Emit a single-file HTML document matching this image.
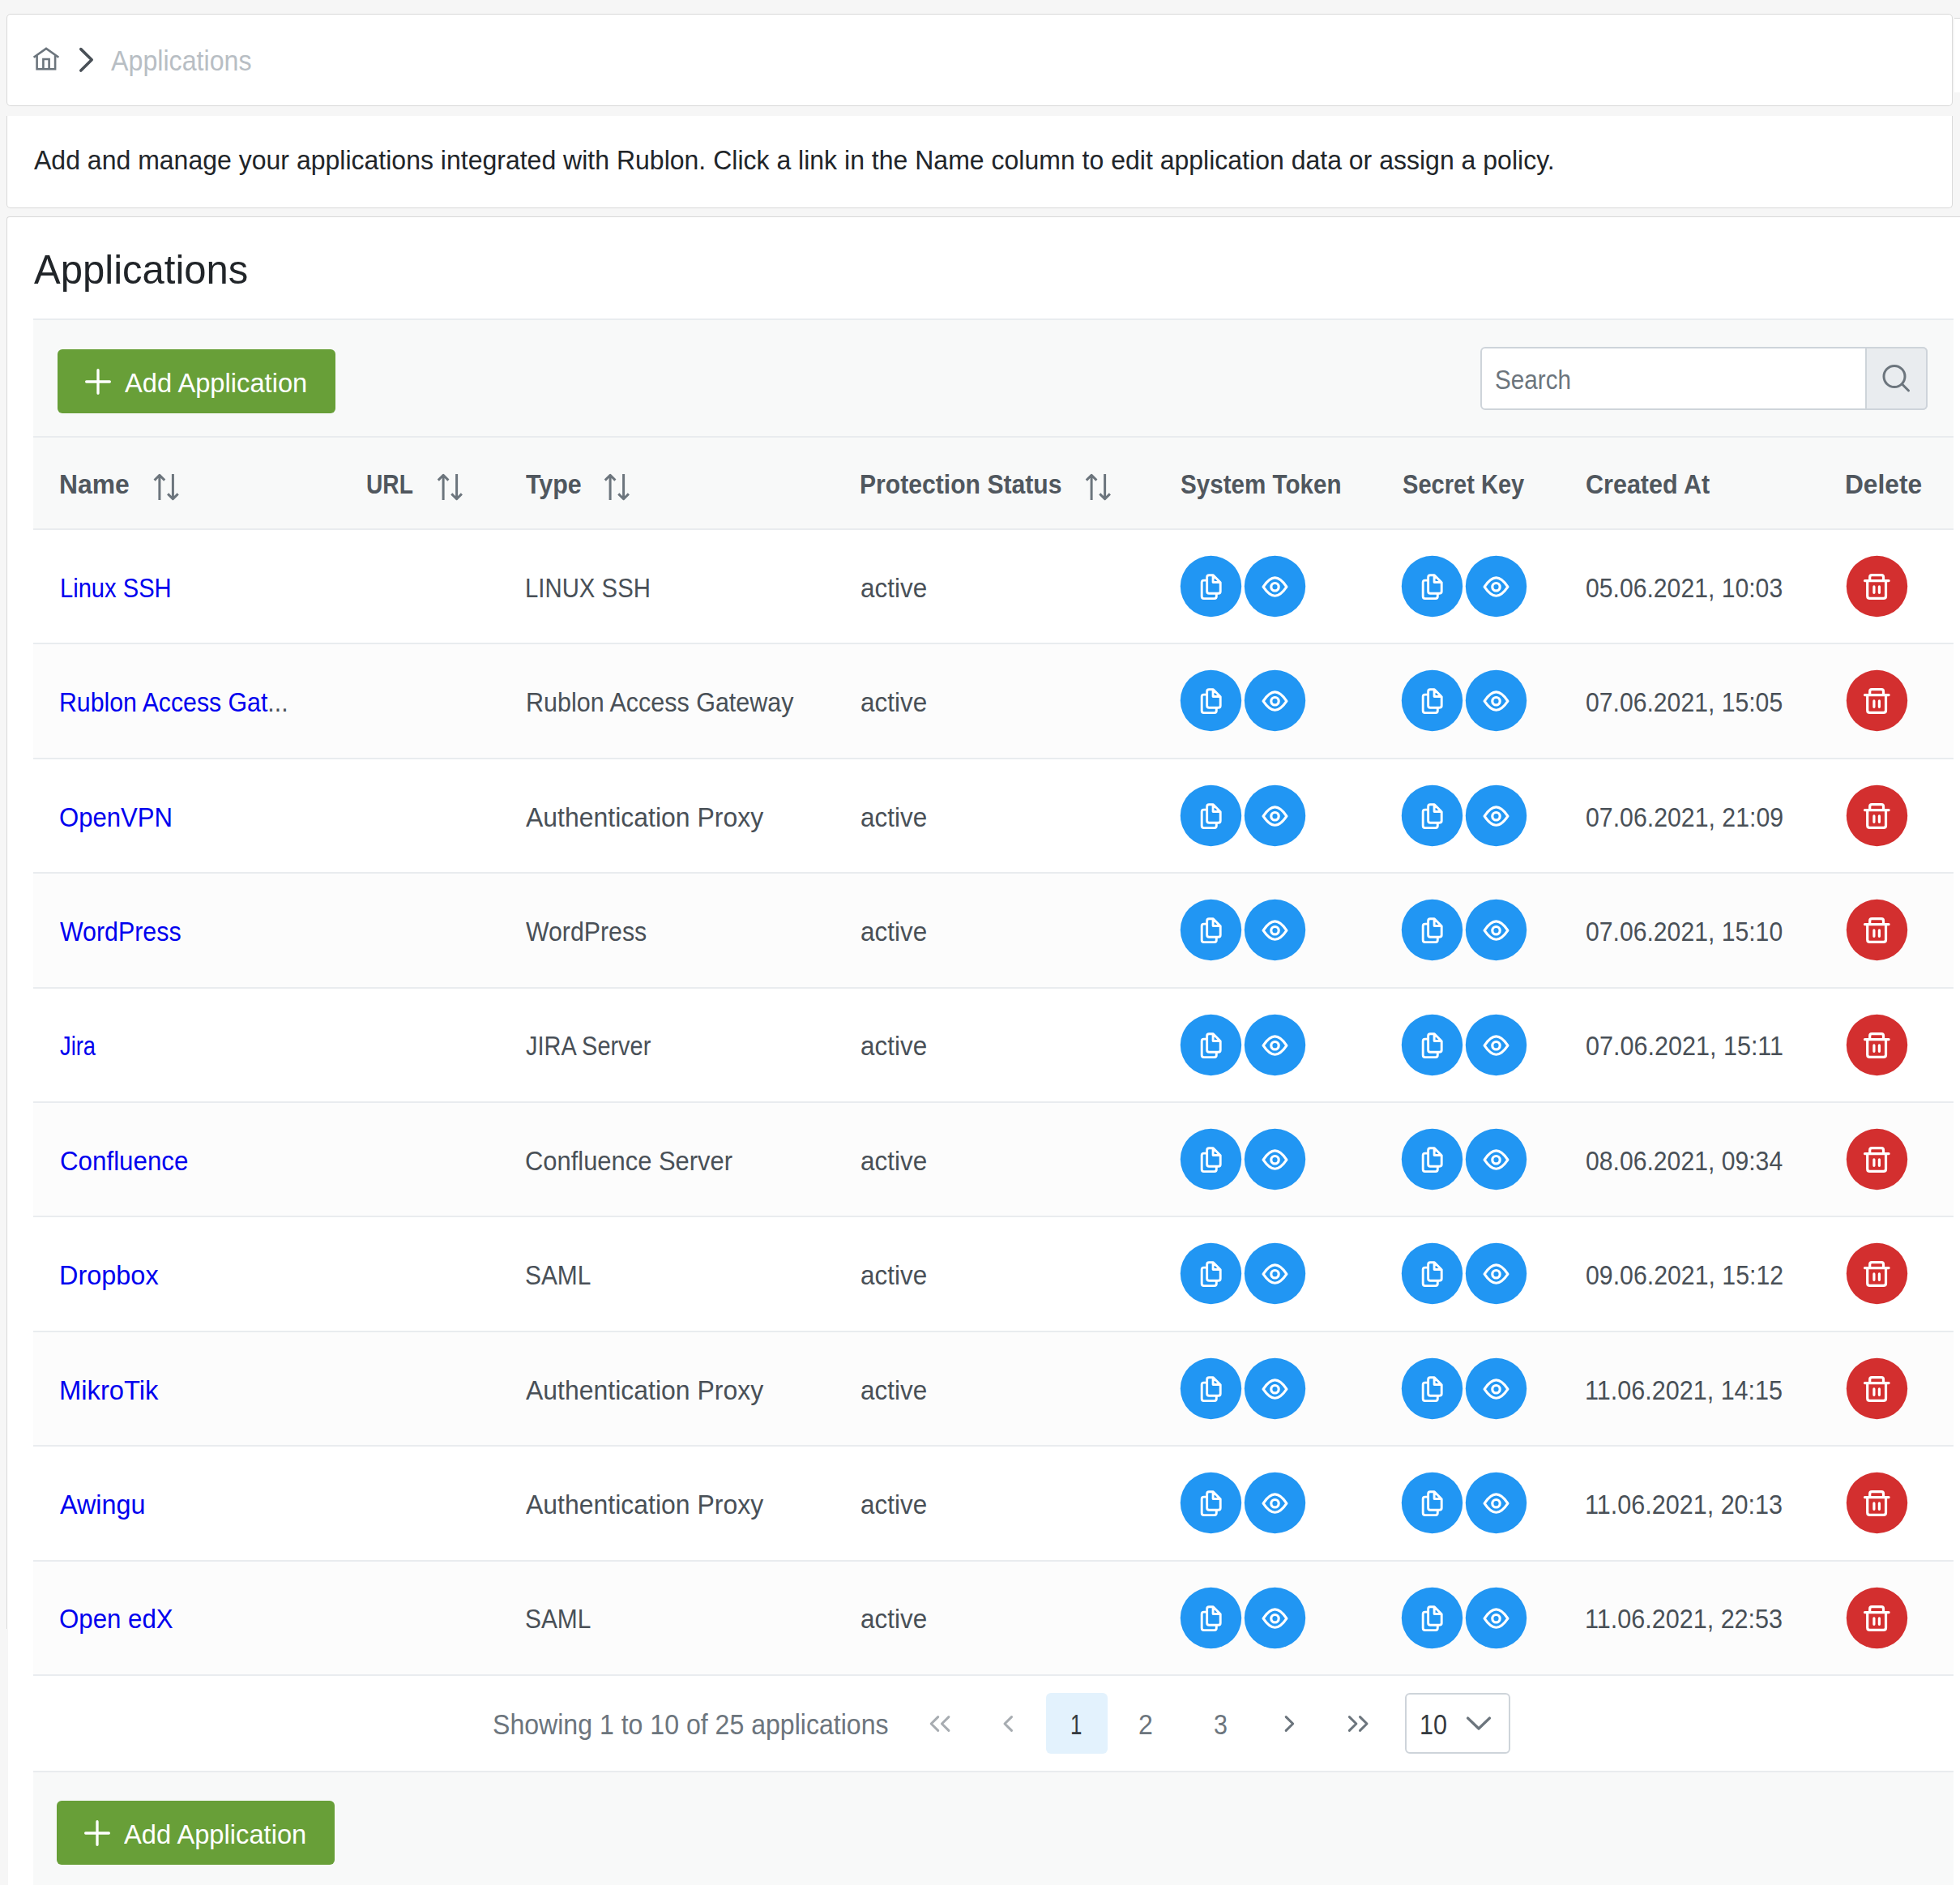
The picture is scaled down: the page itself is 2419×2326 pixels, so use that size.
<!DOCTYPE html>
<html><head><meta charset="utf-8"><style>
html,body{margin:0;padding:0}
html{width:2419px;height:2326px;overflow:hidden}
body{width:2419px;height:2326px;overflow:hidden;background:#f6f6f6;position:relative;font-family:'Liberation Sans', sans-serif}
.b{position:absolute}
.t{position:absolute;white-space:nowrap}
</style></head><body>
<div class="b" style="left:8px;top:17px;width:2402px;height:114px;background:#fff;border:1px solid #d9d9d9;border-radius:5px;box-sizing:border-box"></div>
<div class="b" style="left:2412px;top:22px;width:7px;height:92px;background:#fff;border-top:1px solid #d9d9d9;box-sizing:border-box"></div>
<svg class="b" style="left:0;top:0" width="200" height="140"><path d="M41.6 70.8 L57 59.9 L72.4 70.8 M45.6 67.6 V85.3 H68.1 V67.6 M53.4 85.3 V73 H60.6 V85.3" fill="none" stroke="#6c757d" stroke-width="2.6" stroke-linejoin="miter"/><path d="M99.8 60.6 L113.2 73.8 L99.8 87.0" fill="none" stroke="#495057" stroke-width="3.6" stroke-linecap="round" stroke-linejoin="round"/></svg>
<div class="t" style="left:137.40px;top:58.08px;font-size:34.16px;line-height:34.16px;color:#b8bec4;font-weight:400;transform:scaleX(0.9427);transform-origin:0 0;">Applications</div>
<div class="b" style="left:8px;top:143px;width:2402px;height:114px;background:#fff;border:1px solid #d9d9d9;border-top:none;border-radius:0 0 5px 5px;box-sizing:border-box"></div>
<div class="t" style="left:42.00px;top:181.12px;font-size:33.87px;line-height:33.87px;color:#212529;font-weight:400;transform:scaleX(0.9454);transform-origin:0 0;">Add and manage your applications integrated with Rublon. Click a link in the Name column to edit application data or assign a policy.</div>
<div class="b" style="left:8px;top:267px;width:2411px;height:2059px;background:#fff;border-left:1px solid #d9d9d9;border-top:1px solid #d9d9d9;border-radius:4px 0 0 0;box-sizing:border-box"></div>
<div class="b" style="left:8px;top:2010px;width:2px;height:316px;background:#f6f6f6"></div>
<div class="t" style="left:41.80px;top:307.69px;font-size:50.44px;line-height:50.44px;color:#212529;font-weight:400;transform:scaleX(0.9721);transform-origin:0 0;">Applications</div>
<div class="b" style="left:41px;top:393px;width:2370px;height:146px;background:#f8f9f9"></div>
<div class="b" style="left:41px;top:393px;width:2370px;height:2px;background:#e9ecef"></div>
<div class="b" style="left:41px;top:538px;width:2370px;height:2px;background:#e9ecef"></div>
<div class="b" style="left:71px;top:431px;width:343px;height:79px;background:#689f38;border-radius:6px"></div>
<svg class="b" style="left:105px;top:455px" width="32" height="32" viewBox="0 0 32 32"><path d="M16 1.65 V30.35 M1.65 16 H30.35" stroke="#fff" stroke-width="3.3" stroke-linecap="round"/></svg>
<div class="t" style="left:154.00px;top:455.69px;font-size:33.43px;line-height:33.43px;color:#fff;font-weight:400;transform:scaleX(0.9776);transform-origin:0 0;">Add Application</div>
<div class="b" style="left:1827px;top:428px;width:552px;height:78px;background:#fff;border:2px solid #ced4da;border-radius:6px;box-sizing:border-box"></div>
<div class="b" style="left:2302px;top:428px;width:77px;height:78px;background:#e9ecef;border:2px solid #ced4da;border-radius:0 6px 6px 0;box-sizing:border-box"></div>
<div class="t" style="left:1844.92px;top:451.57px;font-size:33.58px;line-height:33.58px;color:#6c757d;font-weight:400;transform:scaleX(0.8832);transform-origin:0 0;">Search</div>
<svg class="b" style="left:2318px;top:444px" width="44" height="44" viewBox="0 0 44 44">
<circle cx="20" cy="20.5" r="13" fill="none" stroke="#6c757d" stroke-width="3"/><path d="M29.5 30 L37.5 38" stroke="#6c757d" stroke-width="3" stroke-linecap="round"/></svg>
<div class="b" style="left:41px;top:540px;width:2370px;height:112px;background:#f8f9f9"></div>
<div class="t" style="left:72.52px;top:580.52px;font-size:33.87px;line-height:33.87px;color:#50575e;font-weight:700;transform:scaleX(0.9408);transform-origin:0 0;">Name</div>
<svg class="b" style="left:0;top:0" width="2419" height="700"><path d="M196.90 617 V586.5 M190.60 592.6 L196.90 586.3 L203.20 592.6 M213.40 585 V615.5 M207.10 609.4 L213.40 615.7 L219.70 609.4" fill="none" stroke="#6c757d" stroke-width="3" stroke-linecap="butt" stroke-linejoin="round"/></svg>
<div class="t" style="left:452.34px;top:580.52px;font-size:33.87px;line-height:33.87px;color:#50575e;font-weight:700;transform:scaleX(0.8310);transform-origin:0 0;">URL</div>
<svg class="b" style="left:0;top:0" width="2419" height="700"><path d="M547.10 617 V586.5 M540.80 592.6 L547.10 586.3 L553.40 592.6 M563.60 585 V615.5 M557.30 609.4 L563.60 615.7 L569.90 609.4" fill="none" stroke="#6c757d" stroke-width="3" stroke-linecap="butt" stroke-linejoin="round"/></svg>
<div class="t" style="left:649.00px;top:580.52px;font-size:33.87px;line-height:33.87px;color:#50575e;font-weight:700;transform:scaleX(0.8985);transform-origin:0 0;">Type</div>
<svg class="b" style="left:0;top:0" width="2419" height="700"><path d="M753.10 617 V586.5 M746.80 592.6 L753.10 586.3 L759.40 592.6 M769.60 585 V615.5 M763.30 609.4 L769.60 615.7 L775.90 609.4" fill="none" stroke="#6c757d" stroke-width="3" stroke-linecap="butt" stroke-linejoin="round"/></svg>
<div class="t" style="left:1061.22px;top:580.52px;font-size:33.87px;line-height:33.87px;color:#50575e;font-weight:700;transform:scaleX(0.8901);transform-origin:0 0;">Protection Status</div>
<svg class="b" style="left:0;top:0" width="2419" height="700"><path d="M1347.10 617 V586.5 M1340.80 592.6 L1347.10 586.3 L1353.40 592.6 M1363.60 585 V615.5 M1357.30 609.4 L1363.60 615.7 L1369.90 609.4" fill="none" stroke="#6c757d" stroke-width="3" stroke-linecap="butt" stroke-linejoin="round"/></svg>
<div class="t" style="left:1457.00px;top:580.52px;font-size:33.87px;line-height:33.87px;color:#50575e;font-weight:700;transform:scaleX(0.8741);transform-origin:0 0;">System Token</div>
<div class="t" style="left:1730.60px;top:580.52px;font-size:33.87px;line-height:33.87px;color:#50575e;font-weight:700;transform:scaleX(0.8584);transform-origin:0 0;">Secret Key</div>
<div class="t" style="left:1956.90px;top:580.52px;font-size:33.87px;line-height:33.87px;color:#50575e;font-weight:700;transform:scaleX(0.9015);transform-origin:0 0;">Created At</div>
<div class="t" style="left:2276.73px;top:580.52px;font-size:33.87px;line-height:33.87px;color:#50575e;font-weight:700;transform:scaleX(0.9353);transform-origin:0 0;">Delete</div>
<div class="b" style="left:41px;top:652px;width:2370px;height:2px;background:#e9ecef"></div>
<div class="b" style="left:41px;top:793px;width:2370px;height:2px;background:#e9ecef"></div>
<div class="b" style="left:41px;top:935px;width:2370px;height:2px;background:#e9ecef"></div>
<div class="b" style="left:41px;top:1076px;width:2370px;height:2px;background:#e9ecef"></div>
<div class="b" style="left:41px;top:1218px;width:2370px;height:2px;background:#e9ecef"></div>
<div class="b" style="left:41px;top:1359px;width:2370px;height:2px;background:#e9ecef"></div>
<div class="b" style="left:41px;top:1500px;width:2370px;height:2px;background:#e9ecef"></div>
<div class="b" style="left:41px;top:1642px;width:2370px;height:2px;background:#e9ecef"></div>
<div class="b" style="left:41px;top:1783px;width:2370px;height:2px;background:#e9ecef"></div>
<div class="b" style="left:41px;top:1925px;width:2370px;height:2px;background:#e9ecef"></div>
<div class="b" style="left:41px;top:2066px;width:2370px;height:2px;background:#e9ecef"></div>
<div class="b" style="left:41px;top:654px;width:2370px;height:139px;background:#fff"></div>
<div class="t" style="left:74.15px;top:709.02px;font-size:33.28px;line-height:33.28px;color:#0000ee;font-weight:400;transform:scaleX(0.8756);transform-origin:0 0;">Linux SSH</div>
<div class="t" style="left:648.04px;top:709.02px;font-size:33.28px;line-height:33.28px;color:#495057;font-weight:400;transform:scaleX(0.8823);transform-origin:0 0;">LINUX SSH</div>
<div class="t" style="left:1062.06px;top:709.02px;font-size:33.28px;line-height:33.28px;color:#495057;font-weight:400;transform:scaleX(0.9450);transform-origin:0 0;">active</div>
<div class="t" style="left:1956.89px;top:709.02px;font-size:33.28px;line-height:33.28px;color:#495057;font-weight:400;transform:scaleX(0.9066);transform-origin:0 0;">05.06.2021, 10:03</div>
<svg class="b" style="left:1456.00px;top:684.90px" width="77" height="77" viewBox="-38.5 -38.5 77 77"><circle cx="0" cy="0" r="37.7" fill="#2196f3"/><path d="M-4.85 -11.2 Q-4.85 -13.7 -2.35 -13.7 H2.8 L11.7 -4.8 V6.2 Q11.7 8.7 9.2 8.7 H-2.35 Q-4.85 8.7 -4.85 6.2 Z M2.6 -13.2 V-5 H11.2 M6.8 8.7 V12.6 Q6.8 15.1 4.3 15.1 H-8.8 Q-11.3 15.1 -11.3 12.6 V-4.9 Q-11.3 -7.4 -8.8 -7.4 H-4.85" fill="none" stroke="#fff" stroke-width="2.9" stroke-linejoin="round" stroke-linecap="round"/></svg>
<svg class="b" style="left:1535.40px;top:684.90px" width="77" height="77" viewBox="-38.5 -38.5 77 77"><circle cx="0" cy="0" r="37.7" fill="#2196f3"/><path d="M-14.4 0.6 C-9 -7.4 -4 -10.55 0 -10.55 C4 -10.55 9 -7.4 14.4 0.6 C9 8.6 4 11.75 0 11.75 C-4 11.75 -9 8.6 -14.4 0.6 Z" fill="none" stroke="#fff" stroke-width="3.2" stroke-linejoin="round"/><circle cx="0" cy="0.7" r="4.7" fill="none" stroke="#fff" stroke-width="3.2"/></svg>
<svg class="b" style="left:1729.00px;top:684.90px" width="77" height="77" viewBox="-38.5 -38.5 77 77"><circle cx="0" cy="0" r="37.7" fill="#2196f3"/><path d="M-4.85 -11.2 Q-4.85 -13.7 -2.35 -13.7 H2.8 L11.7 -4.8 V6.2 Q11.7 8.7 9.2 8.7 H-2.35 Q-4.85 8.7 -4.85 6.2 Z M2.6 -13.2 V-5 H11.2 M6.8 8.7 V12.6 Q6.8 15.1 4.3 15.1 H-8.8 Q-11.3 15.1 -11.3 12.6 V-4.9 Q-11.3 -7.4 -8.8 -7.4 H-4.85" fill="none" stroke="#fff" stroke-width="2.9" stroke-linejoin="round" stroke-linecap="round"/></svg>
<svg class="b" style="left:1808.40px;top:684.90px" width="77" height="77" viewBox="-38.5 -38.5 77 77"><circle cx="0" cy="0" r="37.7" fill="#2196f3"/><path d="M-14.4 0.6 C-9 -7.4 -4 -10.55 0 -10.55 C4 -10.55 9 -7.4 14.4 0.6 C9 8.6 4 11.75 0 11.75 C-4 11.75 -9 8.6 -14.4 0.6 Z" fill="none" stroke="#fff" stroke-width="3.2" stroke-linejoin="round"/><circle cx="0" cy="0.7" r="4.7" fill="none" stroke="#fff" stroke-width="3.2"/></svg>
<svg class="b" style="left:2278.10px;top:684.90px" width="77" height="77" viewBox="-38.5 -38.5 77 77"><circle cx="0" cy="0" r="37.7" fill="#d32f2f"/><path d="M-15 -6.9 H14.6 M-8.8 -6.9 V-11.3 Q-8.8 -13.8 -6.3 -13.8 H5.5 Q8 -13.8 8 -11.3 V-6.9 M-11.8 -6.9 V11.9 Q-11.8 14.9 -8.8 14.9 H8 Q11 14.9 11 11.9 V-6.9 M-3.6 0.4 V7.8 M2.9 0.4 V7.8" fill="none" stroke="#fff" stroke-width="3.2" stroke-linecap="round" stroke-linejoin="round"/></svg>
<div class="b" style="left:41px;top:795px;width:2370px;height:140px;background:#fcfcfc"></div>
<div class="t" style="left:73.48px;top:850.02px;font-size:33.28px;line-height:33.28px;color:#0000ee;font-weight:400;transform:scaleX(0.9097);transform-origin:0 0;">Rublon Access Gat<span style="color:#495057">...</span></div>
<div class="t" style="left:648.57px;top:850.02px;font-size:33.28px;line-height:33.28px;color:#495057;font-weight:400;transform:scaleX(0.9167);transform-origin:0 0;">Rublon Access Gateway</div>
<div class="t" style="left:1062.06px;top:850.02px;font-size:33.28px;line-height:33.28px;color:#495057;font-weight:400;transform:scaleX(0.9450);transform-origin:0 0;">active</div>
<div class="t" style="left:1956.89px;top:850.02px;font-size:33.28px;line-height:33.28px;color:#495057;font-weight:400;transform:scaleX(0.9066);transform-origin:0 0;">07.06.2021, 15:05</div>
<svg class="b" style="left:1456.00px;top:826.30px" width="77" height="77" viewBox="-38.5 -38.5 77 77"><circle cx="0" cy="0" r="37.7" fill="#2196f3"/><path d="M-4.85 -11.2 Q-4.85 -13.7 -2.35 -13.7 H2.8 L11.7 -4.8 V6.2 Q11.7 8.7 9.2 8.7 H-2.35 Q-4.85 8.7 -4.85 6.2 Z M2.6 -13.2 V-5 H11.2 M6.8 8.7 V12.6 Q6.8 15.1 4.3 15.1 H-8.8 Q-11.3 15.1 -11.3 12.6 V-4.9 Q-11.3 -7.4 -8.8 -7.4 H-4.85" fill="none" stroke="#fff" stroke-width="2.9" stroke-linejoin="round" stroke-linecap="round"/></svg>
<svg class="b" style="left:1535.40px;top:826.30px" width="77" height="77" viewBox="-38.5 -38.5 77 77"><circle cx="0" cy="0" r="37.7" fill="#2196f3"/><path d="M-14.4 0.6 C-9 -7.4 -4 -10.55 0 -10.55 C4 -10.55 9 -7.4 14.4 0.6 C9 8.6 4 11.75 0 11.75 C-4 11.75 -9 8.6 -14.4 0.6 Z" fill="none" stroke="#fff" stroke-width="3.2" stroke-linejoin="round"/><circle cx="0" cy="0.7" r="4.7" fill="none" stroke="#fff" stroke-width="3.2"/></svg>
<svg class="b" style="left:1729.00px;top:826.30px" width="77" height="77" viewBox="-38.5 -38.5 77 77"><circle cx="0" cy="0" r="37.7" fill="#2196f3"/><path d="M-4.85 -11.2 Q-4.85 -13.7 -2.35 -13.7 H2.8 L11.7 -4.8 V6.2 Q11.7 8.7 9.2 8.7 H-2.35 Q-4.85 8.7 -4.85 6.2 Z M2.6 -13.2 V-5 H11.2 M6.8 8.7 V12.6 Q6.8 15.1 4.3 15.1 H-8.8 Q-11.3 15.1 -11.3 12.6 V-4.9 Q-11.3 -7.4 -8.8 -7.4 H-4.85" fill="none" stroke="#fff" stroke-width="2.9" stroke-linejoin="round" stroke-linecap="round"/></svg>
<svg class="b" style="left:1808.40px;top:826.30px" width="77" height="77" viewBox="-38.5 -38.5 77 77"><circle cx="0" cy="0" r="37.7" fill="#2196f3"/><path d="M-14.4 0.6 C-9 -7.4 -4 -10.55 0 -10.55 C4 -10.55 9 -7.4 14.4 0.6 C9 8.6 4 11.75 0 11.75 C-4 11.75 -9 8.6 -14.4 0.6 Z" fill="none" stroke="#fff" stroke-width="3.2" stroke-linejoin="round"/><circle cx="0" cy="0.7" r="4.7" fill="none" stroke="#fff" stroke-width="3.2"/></svg>
<svg class="b" style="left:2278.10px;top:826.30px" width="77" height="77" viewBox="-38.5 -38.5 77 77"><circle cx="0" cy="0" r="37.7" fill="#d32f2f"/><path d="M-15 -6.9 H14.6 M-8.8 -6.9 V-11.3 Q-8.8 -13.8 -6.3 -13.8 H5.5 Q8 -13.8 8 -11.3 V-6.9 M-11.8 -6.9 V11.9 Q-11.8 14.9 -8.8 14.9 H8 Q11 14.9 11 11.9 V-6.9 M-3.6 0.4 V7.8 M2.9 0.4 V7.8" fill="none" stroke="#fff" stroke-width="3.2" stroke-linecap="round" stroke-linejoin="round"/></svg>
<div class="b" style="left:41px;top:937px;width:2370px;height:139px;background:#fff"></div>
<div class="t" style="left:73.07px;top:992.02px;font-size:33.28px;line-height:33.28px;color:#0000ee;font-weight:400;transform:scaleX(0.9349);transform-origin:0 0;">OpenVPN</div>
<div class="t" style="left:649.00px;top:992.02px;font-size:33.28px;line-height:33.28px;color:#495057;font-weight:400;transform:scaleX(0.9608);transform-origin:0 0;">Authentication Proxy</div>
<div class="t" style="left:1062.06px;top:992.02px;font-size:33.28px;line-height:33.28px;color:#495057;font-weight:400;transform:scaleX(0.9450);transform-origin:0 0;">active</div>
<div class="t" style="left:1956.89px;top:992.02px;font-size:33.28px;line-height:33.28px;color:#495057;font-weight:400;transform:scaleX(0.9100);transform-origin:0 0;">07.06.2021, 21:09</div>
<svg class="b" style="left:1456.00px;top:967.70px" width="77" height="77" viewBox="-38.5 -38.5 77 77"><circle cx="0" cy="0" r="37.7" fill="#2196f3"/><path d="M-4.85 -11.2 Q-4.85 -13.7 -2.35 -13.7 H2.8 L11.7 -4.8 V6.2 Q11.7 8.7 9.2 8.7 H-2.35 Q-4.85 8.7 -4.85 6.2 Z M2.6 -13.2 V-5 H11.2 M6.8 8.7 V12.6 Q6.8 15.1 4.3 15.1 H-8.8 Q-11.3 15.1 -11.3 12.6 V-4.9 Q-11.3 -7.4 -8.8 -7.4 H-4.85" fill="none" stroke="#fff" stroke-width="2.9" stroke-linejoin="round" stroke-linecap="round"/></svg>
<svg class="b" style="left:1535.40px;top:967.70px" width="77" height="77" viewBox="-38.5 -38.5 77 77"><circle cx="0" cy="0" r="37.7" fill="#2196f3"/><path d="M-14.4 0.6 C-9 -7.4 -4 -10.55 0 -10.55 C4 -10.55 9 -7.4 14.4 0.6 C9 8.6 4 11.75 0 11.75 C-4 11.75 -9 8.6 -14.4 0.6 Z" fill="none" stroke="#fff" stroke-width="3.2" stroke-linejoin="round"/><circle cx="0" cy="0.7" r="4.7" fill="none" stroke="#fff" stroke-width="3.2"/></svg>
<svg class="b" style="left:1729.00px;top:967.70px" width="77" height="77" viewBox="-38.5 -38.5 77 77"><circle cx="0" cy="0" r="37.7" fill="#2196f3"/><path d="M-4.85 -11.2 Q-4.85 -13.7 -2.35 -13.7 H2.8 L11.7 -4.8 V6.2 Q11.7 8.7 9.2 8.7 H-2.35 Q-4.85 8.7 -4.85 6.2 Z M2.6 -13.2 V-5 H11.2 M6.8 8.7 V12.6 Q6.8 15.1 4.3 15.1 H-8.8 Q-11.3 15.1 -11.3 12.6 V-4.9 Q-11.3 -7.4 -8.8 -7.4 H-4.85" fill="none" stroke="#fff" stroke-width="2.9" stroke-linejoin="round" stroke-linecap="round"/></svg>
<svg class="b" style="left:1808.40px;top:967.70px" width="77" height="77" viewBox="-38.5 -38.5 77 77"><circle cx="0" cy="0" r="37.7" fill="#2196f3"/><path d="M-14.4 0.6 C-9 -7.4 -4 -10.55 0 -10.55 C4 -10.55 9 -7.4 14.4 0.6 C9 8.6 4 11.75 0 11.75 C-4 11.75 -9 8.6 -14.4 0.6 Z" fill="none" stroke="#fff" stroke-width="3.2" stroke-linejoin="round"/><circle cx="0" cy="0.7" r="4.7" fill="none" stroke="#fff" stroke-width="3.2"/></svg>
<svg class="b" style="left:2278.10px;top:967.70px" width="77" height="77" viewBox="-38.5 -38.5 77 77"><circle cx="0" cy="0" r="37.7" fill="#d32f2f"/><path d="M-15 -6.9 H14.6 M-8.8 -6.9 V-11.3 Q-8.8 -13.8 -6.3 -13.8 H5.5 Q8 -13.8 8 -11.3 V-6.9 M-11.8 -6.9 V11.9 Q-11.8 14.9 -8.8 14.9 H8 Q11 14.9 11 11.9 V-6.9 M-3.6 0.4 V7.8 M2.9 0.4 V7.8" fill="none" stroke="#fff" stroke-width="3.2" stroke-linecap="round" stroke-linejoin="round"/></svg>
<div class="b" style="left:41px;top:1078px;width:2370px;height:140px;background:#fcfcfc"></div>
<div class="t" style="left:74.40px;top:1133.02px;font-size:33.28px;line-height:33.28px;color:#0000ee;font-weight:400;transform:scaleX(0.9126);transform-origin:0 0;">WordPress</div>
<div class="t" style="left:649.00px;top:1133.02px;font-size:33.28px;line-height:33.28px;color:#495057;font-weight:400;transform:scaleX(0.9101);transform-origin:0 0;">WordPress</div>
<div class="t" style="left:1062.06px;top:1133.02px;font-size:33.28px;line-height:33.28px;color:#495057;font-weight:400;transform:scaleX(0.9450);transform-origin:0 0;">active</div>
<div class="t" style="left:1956.89px;top:1133.02px;font-size:33.28px;line-height:33.28px;color:#495057;font-weight:400;transform:scaleX(0.9066);transform-origin:0 0;">07.06.2021, 15:10</div>
<svg class="b" style="left:1456.00px;top:1109.10px" width="77" height="77" viewBox="-38.5 -38.5 77 77"><circle cx="0" cy="0" r="37.7" fill="#2196f3"/><path d="M-4.85 -11.2 Q-4.85 -13.7 -2.35 -13.7 H2.8 L11.7 -4.8 V6.2 Q11.7 8.7 9.2 8.7 H-2.35 Q-4.85 8.7 -4.85 6.2 Z M2.6 -13.2 V-5 H11.2 M6.8 8.7 V12.6 Q6.8 15.1 4.3 15.1 H-8.8 Q-11.3 15.1 -11.3 12.6 V-4.9 Q-11.3 -7.4 -8.8 -7.4 H-4.85" fill="none" stroke="#fff" stroke-width="2.9" stroke-linejoin="round" stroke-linecap="round"/></svg>
<svg class="b" style="left:1535.40px;top:1109.10px" width="77" height="77" viewBox="-38.5 -38.5 77 77"><circle cx="0" cy="0" r="37.7" fill="#2196f3"/><path d="M-14.4 0.6 C-9 -7.4 -4 -10.55 0 -10.55 C4 -10.55 9 -7.4 14.4 0.6 C9 8.6 4 11.75 0 11.75 C-4 11.75 -9 8.6 -14.4 0.6 Z" fill="none" stroke="#fff" stroke-width="3.2" stroke-linejoin="round"/><circle cx="0" cy="0.7" r="4.7" fill="none" stroke="#fff" stroke-width="3.2"/></svg>
<svg class="b" style="left:1729.00px;top:1109.10px" width="77" height="77" viewBox="-38.5 -38.5 77 77"><circle cx="0" cy="0" r="37.7" fill="#2196f3"/><path d="M-4.85 -11.2 Q-4.85 -13.7 -2.35 -13.7 H2.8 L11.7 -4.8 V6.2 Q11.7 8.7 9.2 8.7 H-2.35 Q-4.85 8.7 -4.85 6.2 Z M2.6 -13.2 V-5 H11.2 M6.8 8.7 V12.6 Q6.8 15.1 4.3 15.1 H-8.8 Q-11.3 15.1 -11.3 12.6 V-4.9 Q-11.3 -7.4 -8.8 -7.4 H-4.85" fill="none" stroke="#fff" stroke-width="2.9" stroke-linejoin="round" stroke-linecap="round"/></svg>
<svg class="b" style="left:1808.40px;top:1109.10px" width="77" height="77" viewBox="-38.5 -38.5 77 77"><circle cx="0" cy="0" r="37.7" fill="#2196f3"/><path d="M-14.4 0.6 C-9 -7.4 -4 -10.55 0 -10.55 C4 -10.55 9 -7.4 14.4 0.6 C9 8.6 4 11.75 0 11.75 C-4 11.75 -9 8.6 -14.4 0.6 Z" fill="none" stroke="#fff" stroke-width="3.2" stroke-linejoin="round"/><circle cx="0" cy="0.7" r="4.7" fill="none" stroke="#fff" stroke-width="3.2"/></svg>
<svg class="b" style="left:2278.10px;top:1109.10px" width="77" height="77" viewBox="-38.5 -38.5 77 77"><circle cx="0" cy="0" r="37.7" fill="#d32f2f"/><path d="M-15 -6.9 H14.6 M-8.8 -6.9 V-11.3 Q-8.8 -13.8 -6.3 -13.8 H5.5 Q8 -13.8 8 -11.3 V-6.9 M-11.8 -6.9 V11.9 Q-11.8 14.9 -8.8 14.9 H8 Q11 14.9 11 11.9 V-6.9 M-3.6 0.4 V7.8 M2.9 0.4 V7.8" fill="none" stroke="#fff" stroke-width="3.2" stroke-linecap="round" stroke-linejoin="round"/></svg>
<div class="b" style="left:41px;top:1220px;width:2370px;height:139px;background:#fff"></div>
<div class="t" style="left:74.40px;top:1274.02px;font-size:33.28px;line-height:33.28px;color:#0000ee;font-weight:400;transform:scaleX(0.8225);transform-origin:0 0;">Jira</div>
<div class="t" style="left:649.00px;top:1274.02px;font-size:33.28px;line-height:33.28px;color:#495057;font-weight:400;transform:scaleX(0.8693);transform-origin:0 0;">JIRA Server</div>
<div class="t" style="left:1062.06px;top:1274.02px;font-size:33.28px;line-height:33.28px;color:#495057;font-weight:400;transform:scaleX(0.9450);transform-origin:0 0;">active</div>
<div class="t" style="left:1956.88px;top:1274.02px;font-size:33.28px;line-height:33.28px;color:#495057;font-weight:400;transform:scaleX(0.9185);transform-origin:0 0;">07.06.2021, 15:11</div>
<svg class="b" style="left:1456.00px;top:1250.50px" width="77" height="77" viewBox="-38.5 -38.5 77 77"><circle cx="0" cy="0" r="37.7" fill="#2196f3"/><path d="M-4.85 -11.2 Q-4.85 -13.7 -2.35 -13.7 H2.8 L11.7 -4.8 V6.2 Q11.7 8.7 9.2 8.7 H-2.35 Q-4.85 8.7 -4.85 6.2 Z M2.6 -13.2 V-5 H11.2 M6.8 8.7 V12.6 Q6.8 15.1 4.3 15.1 H-8.8 Q-11.3 15.1 -11.3 12.6 V-4.9 Q-11.3 -7.4 -8.8 -7.4 H-4.85" fill="none" stroke="#fff" stroke-width="2.9" stroke-linejoin="round" stroke-linecap="round"/></svg>
<svg class="b" style="left:1535.40px;top:1250.50px" width="77" height="77" viewBox="-38.5 -38.5 77 77"><circle cx="0" cy="0" r="37.7" fill="#2196f3"/><path d="M-14.4 0.6 C-9 -7.4 -4 -10.55 0 -10.55 C4 -10.55 9 -7.4 14.4 0.6 C9 8.6 4 11.75 0 11.75 C-4 11.75 -9 8.6 -14.4 0.6 Z" fill="none" stroke="#fff" stroke-width="3.2" stroke-linejoin="round"/><circle cx="0" cy="0.7" r="4.7" fill="none" stroke="#fff" stroke-width="3.2"/></svg>
<svg class="b" style="left:1729.00px;top:1250.50px" width="77" height="77" viewBox="-38.5 -38.5 77 77"><circle cx="0" cy="0" r="37.7" fill="#2196f3"/><path d="M-4.85 -11.2 Q-4.85 -13.7 -2.35 -13.7 H2.8 L11.7 -4.8 V6.2 Q11.7 8.7 9.2 8.7 H-2.35 Q-4.85 8.7 -4.85 6.2 Z M2.6 -13.2 V-5 H11.2 M6.8 8.7 V12.6 Q6.8 15.1 4.3 15.1 H-8.8 Q-11.3 15.1 -11.3 12.6 V-4.9 Q-11.3 -7.4 -8.8 -7.4 H-4.85" fill="none" stroke="#fff" stroke-width="2.9" stroke-linejoin="round" stroke-linecap="round"/></svg>
<svg class="b" style="left:1808.40px;top:1250.50px" width="77" height="77" viewBox="-38.5 -38.5 77 77"><circle cx="0" cy="0" r="37.7" fill="#2196f3"/><path d="M-14.4 0.6 C-9 -7.4 -4 -10.55 0 -10.55 C4 -10.55 9 -7.4 14.4 0.6 C9 8.6 4 11.75 0 11.75 C-4 11.75 -9 8.6 -14.4 0.6 Z" fill="none" stroke="#fff" stroke-width="3.2" stroke-linejoin="round"/><circle cx="0" cy="0.7" r="4.7" fill="none" stroke="#fff" stroke-width="3.2"/></svg>
<svg class="b" style="left:2278.10px;top:1250.50px" width="77" height="77" viewBox="-38.5 -38.5 77 77"><circle cx="0" cy="0" r="37.7" fill="#d32f2f"/><path d="M-15 -6.9 H14.6 M-8.8 -6.9 V-11.3 Q-8.8 -13.8 -6.3 -13.8 H5.5 Q8 -13.8 8 -11.3 V-6.9 M-11.8 -6.9 V11.9 Q-11.8 14.9 -8.8 14.9 H8 Q11 14.9 11 11.9 V-6.9 M-3.6 0.4 V7.8 M2.9 0.4 V7.8" fill="none" stroke="#fff" stroke-width="3.2" stroke-linecap="round" stroke-linejoin="round"/></svg>
<div class="b" style="left:41px;top:1361px;width:2370px;height:139px;background:#fcfcfc"></div>
<div class="t" style="left:73.56px;top:1416.02px;font-size:33.28px;line-height:33.28px;color:#0000ee;font-weight:400;transform:scaleX(0.9413);transform-origin:0 0;">Confluence</div>
<div class="t" style="left:648.07px;top:1416.02px;font-size:33.28px;line-height:33.28px;color:#495057;font-weight:400;transform:scaleX(0.9292);transform-origin:0 0;">Confluence Server</div>
<div class="t" style="left:1062.06px;top:1416.02px;font-size:33.28px;line-height:33.28px;color:#495057;font-weight:400;transform:scaleX(0.9450);transform-origin:0 0;">active</div>
<div class="t" style="left:1956.89px;top:1416.02px;font-size:33.28px;line-height:33.28px;color:#495057;font-weight:400;transform:scaleX(0.9066);transform-origin:0 0;">08.06.2021, 09:34</div>
<svg class="b" style="left:1456.00px;top:1391.90px" width="77" height="77" viewBox="-38.5 -38.5 77 77"><circle cx="0" cy="0" r="37.7" fill="#2196f3"/><path d="M-4.85 -11.2 Q-4.85 -13.7 -2.35 -13.7 H2.8 L11.7 -4.8 V6.2 Q11.7 8.7 9.2 8.7 H-2.35 Q-4.85 8.7 -4.85 6.2 Z M2.6 -13.2 V-5 H11.2 M6.8 8.7 V12.6 Q6.8 15.1 4.3 15.1 H-8.8 Q-11.3 15.1 -11.3 12.6 V-4.9 Q-11.3 -7.4 -8.8 -7.4 H-4.85" fill="none" stroke="#fff" stroke-width="2.9" stroke-linejoin="round" stroke-linecap="round"/></svg>
<svg class="b" style="left:1535.40px;top:1391.90px" width="77" height="77" viewBox="-38.5 -38.5 77 77"><circle cx="0" cy="0" r="37.7" fill="#2196f3"/><path d="M-14.4 0.6 C-9 -7.4 -4 -10.55 0 -10.55 C4 -10.55 9 -7.4 14.4 0.6 C9 8.6 4 11.75 0 11.75 C-4 11.75 -9 8.6 -14.4 0.6 Z" fill="none" stroke="#fff" stroke-width="3.2" stroke-linejoin="round"/><circle cx="0" cy="0.7" r="4.7" fill="none" stroke="#fff" stroke-width="3.2"/></svg>
<svg class="b" style="left:1729.00px;top:1391.90px" width="77" height="77" viewBox="-38.5 -38.5 77 77"><circle cx="0" cy="0" r="37.7" fill="#2196f3"/><path d="M-4.85 -11.2 Q-4.85 -13.7 -2.35 -13.7 H2.8 L11.7 -4.8 V6.2 Q11.7 8.7 9.2 8.7 H-2.35 Q-4.85 8.7 -4.85 6.2 Z M2.6 -13.2 V-5 H11.2 M6.8 8.7 V12.6 Q6.8 15.1 4.3 15.1 H-8.8 Q-11.3 15.1 -11.3 12.6 V-4.9 Q-11.3 -7.4 -8.8 -7.4 H-4.85" fill="none" stroke="#fff" stroke-width="2.9" stroke-linejoin="round" stroke-linecap="round"/></svg>
<svg class="b" style="left:1808.40px;top:1391.90px" width="77" height="77" viewBox="-38.5 -38.5 77 77"><circle cx="0" cy="0" r="37.7" fill="#2196f3"/><path d="M-14.4 0.6 C-9 -7.4 -4 -10.55 0 -10.55 C4 -10.55 9 -7.4 14.4 0.6 C9 8.6 4 11.75 0 11.75 C-4 11.75 -9 8.6 -14.4 0.6 Z" fill="none" stroke="#fff" stroke-width="3.2" stroke-linejoin="round"/><circle cx="0" cy="0.7" r="4.7" fill="none" stroke="#fff" stroke-width="3.2"/></svg>
<svg class="b" style="left:2278.10px;top:1391.90px" width="77" height="77" viewBox="-38.5 -38.5 77 77"><circle cx="0" cy="0" r="37.7" fill="#d32f2f"/><path d="M-15 -6.9 H14.6 M-8.8 -6.9 V-11.3 Q-8.8 -13.8 -6.3 -13.8 H5.5 Q8 -13.8 8 -11.3 V-6.9 M-11.8 -6.9 V11.9 Q-11.8 14.9 -8.8 14.9 H8 Q11 14.9 11 11.9 V-6.9 M-3.6 0.4 V7.8 M2.9 0.4 V7.8" fill="none" stroke="#fff" stroke-width="3.2" stroke-linecap="round" stroke-linejoin="round"/></svg>
<div class="b" style="left:41px;top:1502px;width:2370px;height:140px;background:#fff"></div>
<div class="t" style="left:73.05px;top:1557.02px;font-size:33.28px;line-height:33.28px;color:#0000ee;font-weight:400;transform:scaleX(0.9750);transform-origin:0 0;">Dropbox</div>
<div class="t" style="left:648.10px;top:1557.02px;font-size:33.28px;line-height:33.28px;color:#495057;font-weight:400;transform:scaleX(0.8980);transform-origin:0 0;">SAML</div>
<div class="t" style="left:1062.06px;top:1557.02px;font-size:33.28px;line-height:33.28px;color:#495057;font-weight:400;transform:scaleX(0.9450);transform-origin:0 0;">active</div>
<div class="t" style="left:1956.89px;top:1557.02px;font-size:33.28px;line-height:33.28px;color:#495057;font-weight:400;transform:scaleX(0.9100);transform-origin:0 0;">09.06.2021, 15:12</div>
<svg class="b" style="left:1456.00px;top:1533.30px" width="77" height="77" viewBox="-38.5 -38.5 77 77"><circle cx="0" cy="0" r="37.7" fill="#2196f3"/><path d="M-4.85 -11.2 Q-4.85 -13.7 -2.35 -13.7 H2.8 L11.7 -4.8 V6.2 Q11.7 8.7 9.2 8.7 H-2.35 Q-4.85 8.7 -4.85 6.2 Z M2.6 -13.2 V-5 H11.2 M6.8 8.7 V12.6 Q6.8 15.1 4.3 15.1 H-8.8 Q-11.3 15.1 -11.3 12.6 V-4.9 Q-11.3 -7.4 -8.8 -7.4 H-4.85" fill="none" stroke="#fff" stroke-width="2.9" stroke-linejoin="round" stroke-linecap="round"/></svg>
<svg class="b" style="left:1535.40px;top:1533.30px" width="77" height="77" viewBox="-38.5 -38.5 77 77"><circle cx="0" cy="0" r="37.7" fill="#2196f3"/><path d="M-14.4 0.6 C-9 -7.4 -4 -10.55 0 -10.55 C4 -10.55 9 -7.4 14.4 0.6 C9 8.6 4 11.75 0 11.75 C-4 11.75 -9 8.6 -14.4 0.6 Z" fill="none" stroke="#fff" stroke-width="3.2" stroke-linejoin="round"/><circle cx="0" cy="0.7" r="4.7" fill="none" stroke="#fff" stroke-width="3.2"/></svg>
<svg class="b" style="left:1729.00px;top:1533.30px" width="77" height="77" viewBox="-38.5 -38.5 77 77"><circle cx="0" cy="0" r="37.7" fill="#2196f3"/><path d="M-4.85 -11.2 Q-4.85 -13.7 -2.35 -13.7 H2.8 L11.7 -4.8 V6.2 Q11.7 8.7 9.2 8.7 H-2.35 Q-4.85 8.7 -4.85 6.2 Z M2.6 -13.2 V-5 H11.2 M6.8 8.7 V12.6 Q6.8 15.1 4.3 15.1 H-8.8 Q-11.3 15.1 -11.3 12.6 V-4.9 Q-11.3 -7.4 -8.8 -7.4 H-4.85" fill="none" stroke="#fff" stroke-width="2.9" stroke-linejoin="round" stroke-linecap="round"/></svg>
<svg class="b" style="left:1808.40px;top:1533.30px" width="77" height="77" viewBox="-38.5 -38.5 77 77"><circle cx="0" cy="0" r="37.7" fill="#2196f3"/><path d="M-14.4 0.6 C-9 -7.4 -4 -10.55 0 -10.55 C4 -10.55 9 -7.4 14.4 0.6 C9 8.6 4 11.75 0 11.75 C-4 11.75 -9 8.6 -14.4 0.6 Z" fill="none" stroke="#fff" stroke-width="3.2" stroke-linejoin="round"/><circle cx="0" cy="0.7" r="4.7" fill="none" stroke="#fff" stroke-width="3.2"/></svg>
<svg class="b" style="left:2278.10px;top:1533.30px" width="77" height="77" viewBox="-38.5 -38.5 77 77"><circle cx="0" cy="0" r="37.7" fill="#d32f2f"/><path d="M-15 -6.9 H14.6 M-8.8 -6.9 V-11.3 Q-8.8 -13.8 -6.3 -13.8 H5.5 Q8 -13.8 8 -11.3 V-6.9 M-11.8 -6.9 V11.9 Q-11.8 14.9 -8.8 14.9 H8 Q11 14.9 11 11.9 V-6.9 M-3.6 0.4 V7.8 M2.9 0.4 V7.8" fill="none" stroke="#fff" stroke-width="3.2" stroke-linecap="round" stroke-linejoin="round"/></svg>
<div class="b" style="left:41px;top:1644px;width:2370px;height:139px;background:#fcfcfc"></div>
<div class="t" style="left:73.03px;top:1699.02px;font-size:33.28px;line-height:33.28px;color:#0000ee;font-weight:400;transform:scaleX(0.9838);transform-origin:0 0;">MikroTik</div>
<div class="t" style="left:649.00px;top:1699.02px;font-size:33.28px;line-height:33.28px;color:#495057;font-weight:400;transform:scaleX(0.9608);transform-origin:0 0;">Authentication Proxy</div>
<div class="t" style="left:1062.06px;top:1699.02px;font-size:33.28px;line-height:33.28px;color:#495057;font-weight:400;transform:scaleX(0.9450);transform-origin:0 0;">active</div>
<div class="t" style="left:1955.96px;top:1699.02px;font-size:33.28px;line-height:33.28px;color:#495057;font-weight:400;transform:scaleX(0.9185);transform-origin:0 0;">11.06.2021, 14:15</div>
<svg class="b" style="left:1456.00px;top:1674.70px" width="77" height="77" viewBox="-38.5 -38.5 77 77"><circle cx="0" cy="0" r="37.7" fill="#2196f3"/><path d="M-4.85 -11.2 Q-4.85 -13.7 -2.35 -13.7 H2.8 L11.7 -4.8 V6.2 Q11.7 8.7 9.2 8.7 H-2.35 Q-4.85 8.7 -4.85 6.2 Z M2.6 -13.2 V-5 H11.2 M6.8 8.7 V12.6 Q6.8 15.1 4.3 15.1 H-8.8 Q-11.3 15.1 -11.3 12.6 V-4.9 Q-11.3 -7.4 -8.8 -7.4 H-4.85" fill="none" stroke="#fff" stroke-width="2.9" stroke-linejoin="round" stroke-linecap="round"/></svg>
<svg class="b" style="left:1535.40px;top:1674.70px" width="77" height="77" viewBox="-38.5 -38.5 77 77"><circle cx="0" cy="0" r="37.7" fill="#2196f3"/><path d="M-14.4 0.6 C-9 -7.4 -4 -10.55 0 -10.55 C4 -10.55 9 -7.4 14.4 0.6 C9 8.6 4 11.75 0 11.75 C-4 11.75 -9 8.6 -14.4 0.6 Z" fill="none" stroke="#fff" stroke-width="3.2" stroke-linejoin="round"/><circle cx="0" cy="0.7" r="4.7" fill="none" stroke="#fff" stroke-width="3.2"/></svg>
<svg class="b" style="left:1729.00px;top:1674.70px" width="77" height="77" viewBox="-38.5 -38.5 77 77"><circle cx="0" cy="0" r="37.7" fill="#2196f3"/><path d="M-4.85 -11.2 Q-4.85 -13.7 -2.35 -13.7 H2.8 L11.7 -4.8 V6.2 Q11.7 8.7 9.2 8.7 H-2.35 Q-4.85 8.7 -4.85 6.2 Z M2.6 -13.2 V-5 H11.2 M6.8 8.7 V12.6 Q6.8 15.1 4.3 15.1 H-8.8 Q-11.3 15.1 -11.3 12.6 V-4.9 Q-11.3 -7.4 -8.8 -7.4 H-4.85" fill="none" stroke="#fff" stroke-width="2.9" stroke-linejoin="round" stroke-linecap="round"/></svg>
<svg class="b" style="left:1808.40px;top:1674.70px" width="77" height="77" viewBox="-38.5 -38.5 77 77"><circle cx="0" cy="0" r="37.7" fill="#2196f3"/><path d="M-14.4 0.6 C-9 -7.4 -4 -10.55 0 -10.55 C4 -10.55 9 -7.4 14.4 0.6 C9 8.6 4 11.75 0 11.75 C-4 11.75 -9 8.6 -14.4 0.6 Z" fill="none" stroke="#fff" stroke-width="3.2" stroke-linejoin="round"/><circle cx="0" cy="0.7" r="4.7" fill="none" stroke="#fff" stroke-width="3.2"/></svg>
<svg class="b" style="left:2278.10px;top:1674.70px" width="77" height="77" viewBox="-38.5 -38.5 77 77"><circle cx="0" cy="0" r="37.7" fill="#d32f2f"/><path d="M-15 -6.9 H14.6 M-8.8 -6.9 V-11.3 Q-8.8 -13.8 -6.3 -13.8 H5.5 Q8 -13.8 8 -11.3 V-6.9 M-11.8 -6.9 V11.9 Q-11.8 14.9 -8.8 14.9 H8 Q11 14.9 11 11.9 V-6.9 M-3.6 0.4 V7.8 M2.9 0.4 V7.8" fill="none" stroke="#fff" stroke-width="3.2" stroke-linecap="round" stroke-linejoin="round"/></svg>
<div class="b" style="left:41px;top:1785px;width:2370px;height:140px;background:#fff"></div>
<div class="t" style="left:73.60px;top:1840.02px;font-size:33.28px;line-height:33.28px;color:#0000ee;font-weight:400;transform:scaleX(0.9719);transform-origin:0 0;">Awingu</div>
<div class="t" style="left:649.00px;top:1840.02px;font-size:33.28px;line-height:33.28px;color:#495057;font-weight:400;transform:scaleX(0.9608);transform-origin:0 0;">Authentication Proxy</div>
<div class="t" style="left:1062.06px;top:1840.02px;font-size:33.28px;line-height:33.28px;color:#495057;font-weight:400;transform:scaleX(0.9450);transform-origin:0 0;">active</div>
<div class="t" style="left:1955.96px;top:1840.02px;font-size:33.28px;line-height:33.28px;color:#495057;font-weight:400;transform:scaleX(0.9185);transform-origin:0 0;">11.06.2021, 20:13</div>
<svg class="b" style="left:1456.00px;top:1816.10px" width="77" height="77" viewBox="-38.5 -38.5 77 77"><circle cx="0" cy="0" r="37.7" fill="#2196f3"/><path d="M-4.85 -11.2 Q-4.85 -13.7 -2.35 -13.7 H2.8 L11.7 -4.8 V6.2 Q11.7 8.7 9.2 8.7 H-2.35 Q-4.85 8.7 -4.85 6.2 Z M2.6 -13.2 V-5 H11.2 M6.8 8.7 V12.6 Q6.8 15.1 4.3 15.1 H-8.8 Q-11.3 15.1 -11.3 12.6 V-4.9 Q-11.3 -7.4 -8.8 -7.4 H-4.85" fill="none" stroke="#fff" stroke-width="2.9" stroke-linejoin="round" stroke-linecap="round"/></svg>
<svg class="b" style="left:1535.40px;top:1816.10px" width="77" height="77" viewBox="-38.5 -38.5 77 77"><circle cx="0" cy="0" r="37.7" fill="#2196f3"/><path d="M-14.4 0.6 C-9 -7.4 -4 -10.55 0 -10.55 C4 -10.55 9 -7.4 14.4 0.6 C9 8.6 4 11.75 0 11.75 C-4 11.75 -9 8.6 -14.4 0.6 Z" fill="none" stroke="#fff" stroke-width="3.2" stroke-linejoin="round"/><circle cx="0" cy="0.7" r="4.7" fill="none" stroke="#fff" stroke-width="3.2"/></svg>
<svg class="b" style="left:1729.00px;top:1816.10px" width="77" height="77" viewBox="-38.5 -38.5 77 77"><circle cx="0" cy="0" r="37.7" fill="#2196f3"/><path d="M-4.85 -11.2 Q-4.85 -13.7 -2.35 -13.7 H2.8 L11.7 -4.8 V6.2 Q11.7 8.7 9.2 8.7 H-2.35 Q-4.85 8.7 -4.85 6.2 Z M2.6 -13.2 V-5 H11.2 M6.8 8.7 V12.6 Q6.8 15.1 4.3 15.1 H-8.8 Q-11.3 15.1 -11.3 12.6 V-4.9 Q-11.3 -7.4 -8.8 -7.4 H-4.85" fill="none" stroke="#fff" stroke-width="2.9" stroke-linejoin="round" stroke-linecap="round"/></svg>
<svg class="b" style="left:1808.40px;top:1816.10px" width="77" height="77" viewBox="-38.5 -38.5 77 77"><circle cx="0" cy="0" r="37.7" fill="#2196f3"/><path d="M-14.4 0.6 C-9 -7.4 -4 -10.55 0 -10.55 C4 -10.55 9 -7.4 14.4 0.6 C9 8.6 4 11.75 0 11.75 C-4 11.75 -9 8.6 -14.4 0.6 Z" fill="none" stroke="#fff" stroke-width="3.2" stroke-linejoin="round"/><circle cx="0" cy="0.7" r="4.7" fill="none" stroke="#fff" stroke-width="3.2"/></svg>
<svg class="b" style="left:2278.10px;top:1816.10px" width="77" height="77" viewBox="-38.5 -38.5 77 77"><circle cx="0" cy="0" r="37.7" fill="#d32f2f"/><path d="M-15 -6.9 H14.6 M-8.8 -6.9 V-11.3 Q-8.8 -13.8 -6.3 -13.8 H5.5 Q8 -13.8 8 -11.3 V-6.9 M-11.8 -6.9 V11.9 Q-11.8 14.9 -8.8 14.9 H8 Q11 14.9 11 11.9 V-6.9 M-3.6 0.4 V7.8 M2.9 0.4 V7.8" fill="none" stroke="#fff" stroke-width="3.2" stroke-linecap="round" stroke-linejoin="round"/></svg>
<div class="b" style="left:41px;top:1927px;width:2370px;height:139px;background:#fcfcfc"></div>
<div class="t" style="left:73.06px;top:1981.02px;font-size:33.28px;line-height:33.28px;color:#0000ee;font-weight:400;transform:scaleX(0.9386);transform-origin:0 0;">Open edX</div>
<div class="t" style="left:648.10px;top:1981.02px;font-size:33.28px;line-height:33.28px;color:#495057;font-weight:400;transform:scaleX(0.8980);transform-origin:0 0;">SAML</div>
<div class="t" style="left:1062.06px;top:1981.02px;font-size:33.28px;line-height:33.28px;color:#495057;font-weight:400;transform:scaleX(0.9450);transform-origin:0 0;">active</div>
<div class="t" style="left:1955.96px;top:1981.02px;font-size:33.28px;line-height:33.28px;color:#495057;font-weight:400;transform:scaleX(0.9185);transform-origin:0 0;">11.06.2021, 22:53</div>
<svg class="b" style="left:1456.00px;top:1957.50px" width="77" height="77" viewBox="-38.5 -38.5 77 77"><circle cx="0" cy="0" r="37.7" fill="#2196f3"/><path d="M-4.85 -11.2 Q-4.85 -13.7 -2.35 -13.7 H2.8 L11.7 -4.8 V6.2 Q11.7 8.7 9.2 8.7 H-2.35 Q-4.85 8.7 -4.85 6.2 Z M2.6 -13.2 V-5 H11.2 M6.8 8.7 V12.6 Q6.8 15.1 4.3 15.1 H-8.8 Q-11.3 15.1 -11.3 12.6 V-4.9 Q-11.3 -7.4 -8.8 -7.4 H-4.85" fill="none" stroke="#fff" stroke-width="2.9" stroke-linejoin="round" stroke-linecap="round"/></svg>
<svg class="b" style="left:1535.40px;top:1957.50px" width="77" height="77" viewBox="-38.5 -38.5 77 77"><circle cx="0" cy="0" r="37.7" fill="#2196f3"/><path d="M-14.4 0.6 C-9 -7.4 -4 -10.55 0 -10.55 C4 -10.55 9 -7.4 14.4 0.6 C9 8.6 4 11.75 0 11.75 C-4 11.75 -9 8.6 -14.4 0.6 Z" fill="none" stroke="#fff" stroke-width="3.2" stroke-linejoin="round"/><circle cx="0" cy="0.7" r="4.7" fill="none" stroke="#fff" stroke-width="3.2"/></svg>
<svg class="b" style="left:1729.00px;top:1957.50px" width="77" height="77" viewBox="-38.5 -38.5 77 77"><circle cx="0" cy="0" r="37.7" fill="#2196f3"/><path d="M-4.85 -11.2 Q-4.85 -13.7 -2.35 -13.7 H2.8 L11.7 -4.8 V6.2 Q11.7 8.7 9.2 8.7 H-2.35 Q-4.85 8.7 -4.85 6.2 Z M2.6 -13.2 V-5 H11.2 M6.8 8.7 V12.6 Q6.8 15.1 4.3 15.1 H-8.8 Q-11.3 15.1 -11.3 12.6 V-4.9 Q-11.3 -7.4 -8.8 -7.4 H-4.85" fill="none" stroke="#fff" stroke-width="2.9" stroke-linejoin="round" stroke-linecap="round"/></svg>
<svg class="b" style="left:1808.40px;top:1957.50px" width="77" height="77" viewBox="-38.5 -38.5 77 77"><circle cx="0" cy="0" r="37.7" fill="#2196f3"/><path d="M-14.4 0.6 C-9 -7.4 -4 -10.55 0 -10.55 C4 -10.55 9 -7.4 14.4 0.6 C9 8.6 4 11.75 0 11.75 C-4 11.75 -9 8.6 -14.4 0.6 Z" fill="none" stroke="#fff" stroke-width="3.2" stroke-linejoin="round"/><circle cx="0" cy="0.7" r="4.7" fill="none" stroke="#fff" stroke-width="3.2"/></svg>
<svg class="b" style="left:2278.10px;top:1957.50px" width="77" height="77" viewBox="-38.5 -38.5 77 77"><circle cx="0" cy="0" r="37.7" fill="#d32f2f"/><path d="M-15 -6.9 H14.6 M-8.8 -6.9 V-11.3 Q-8.8 -13.8 -6.3 -13.8 H5.5 Q8 -13.8 8 -11.3 V-6.9 M-11.8 -6.9 V11.9 Q-11.8 14.9 -8.8 14.9 H8 Q11 14.9 11 11.9 V-6.9 M-3.6 0.4 V7.8 M2.9 0.4 V7.8" fill="none" stroke="#fff" stroke-width="3.2" stroke-linecap="round" stroke-linejoin="round"/></svg>
<div class="b" style="left:41px;top:2068px;width:2370px;height:117px;background:#fff"></div>
<div class="t" style="left:608.46px;top:2110.78px;font-size:34.16px;line-height:34.16px;color:#6c757d;font-weight:400;transform:scaleX(0.9390);transform-origin:0 0;">Showing 1 to 10 of 25 applications</div>
<div class="b" style="left:1291px;top:2089px;width:76px;height:75px;background:#e3f2fd;border-radius:6px"></div>
<svg class="b" style="left:0;top:0" width="2419" height="2326"><path d="M1157.70 2118.60 L1149.20 2127.00 L1157.70 2135.40 M1170.90 2118.60 L1162.40 2127.00 L1170.90 2135.40 " fill="none" stroke="#a7acb1" stroke-width="3" stroke-linecap="round" stroke-linejoin="round"/></svg>
<svg class="b" style="left:0;top:0" width="2419" height="2326"><path d="M1248.50 2118.60 L1240.00 2127.00 L1248.50 2135.40 " fill="none" stroke="#a7acb1" stroke-width="3" stroke-linecap="round" stroke-linejoin="round"/></svg>
<svg class="b" style="left:0;top:0" width="2419" height="2326"><path d="M1587.20 2118.60 L1595.70 2127.00 L1587.20 2135.40 " fill="none" stroke="#6c757d" stroke-width="3" stroke-linecap="round" stroke-linejoin="round"/></svg>
<svg class="b" style="left:0;top:0" width="2419" height="2326"><path d="M1665.40 2118.60 L1673.90 2127.00 L1665.40 2135.40 M1678.50 2118.60 L1687.00 2127.00 L1678.50 2135.40 " fill="none" stroke="#6c757d" stroke-width="3" stroke-linecap="round" stroke-linejoin="round"/></svg>
<div class="t" style="left:1321.39px;top:2111.16px;font-size:34.3px;line-height:34.3px;color:#343a40;font-weight:400;transform:scaleX(0.7562);transform-origin:0 0;">1</div>
<div class="t" style="left:1404.56px;top:2111.16px;font-size:34.3px;line-height:34.3px;color:#6c757d;font-weight:400;transform:scaleX(0.9353);transform-origin:0 0;">2</div>
<div class="t" style="left:1498.01px;top:2111.16px;font-size:34.3px;line-height:34.3px;color:#6c757d;font-weight:400;transform:scaleX(0.8882);transform-origin:0 0;">3</div>
<div class="b" style="left:1734px;top:2089px;width:130px;height:75px;background:#fff;border:2px solid #ced4da;border-radius:6px;box-sizing:border-box"></div>
<div class="t" style="left:1752.02px;top:2111.16px;font-size:34.3px;line-height:34.3px;color:#343a40;font-weight:400;transform:scaleX(0.8895);transform-origin:0 0;">10</div>
<svg class="b" style="left:1808px;top:2116px" width="34" height="22" viewBox="0 0 34 22"><path d="M3.5 4 L17 17 L30.5 4" fill="none" stroke="#6c757d" stroke-width="3.2" stroke-linecap="round" stroke-linejoin="round"/></svg>
<div class="b" style="left:41px;top:2185px;width:2370px;height:141px;background:#f8f9f9"></div>
<div class="b" style="left:41px;top:2185px;width:2370px;height:2px;background:#e9ecef"></div>
<div class="b" style="left:70px;top:2222px;width:343px;height:79px;background:#689f38;border-radius:6px"></div>
<svg class="b" style="left:104px;top:2246px" width="32" height="32" viewBox="0 0 32 32"><path d="M16 1.65 V30.35 M1.65 16 H30.35" stroke="#fff" stroke-width="3.3" stroke-linecap="round"/></svg>
<div class="t" style="left:153.00px;top:2246.69px;font-size:33.43px;line-height:33.43px;color:#fff;font-weight:400;transform:scaleX(0.9776);transform-origin:0 0;">Add Application</div>
</body></html>
